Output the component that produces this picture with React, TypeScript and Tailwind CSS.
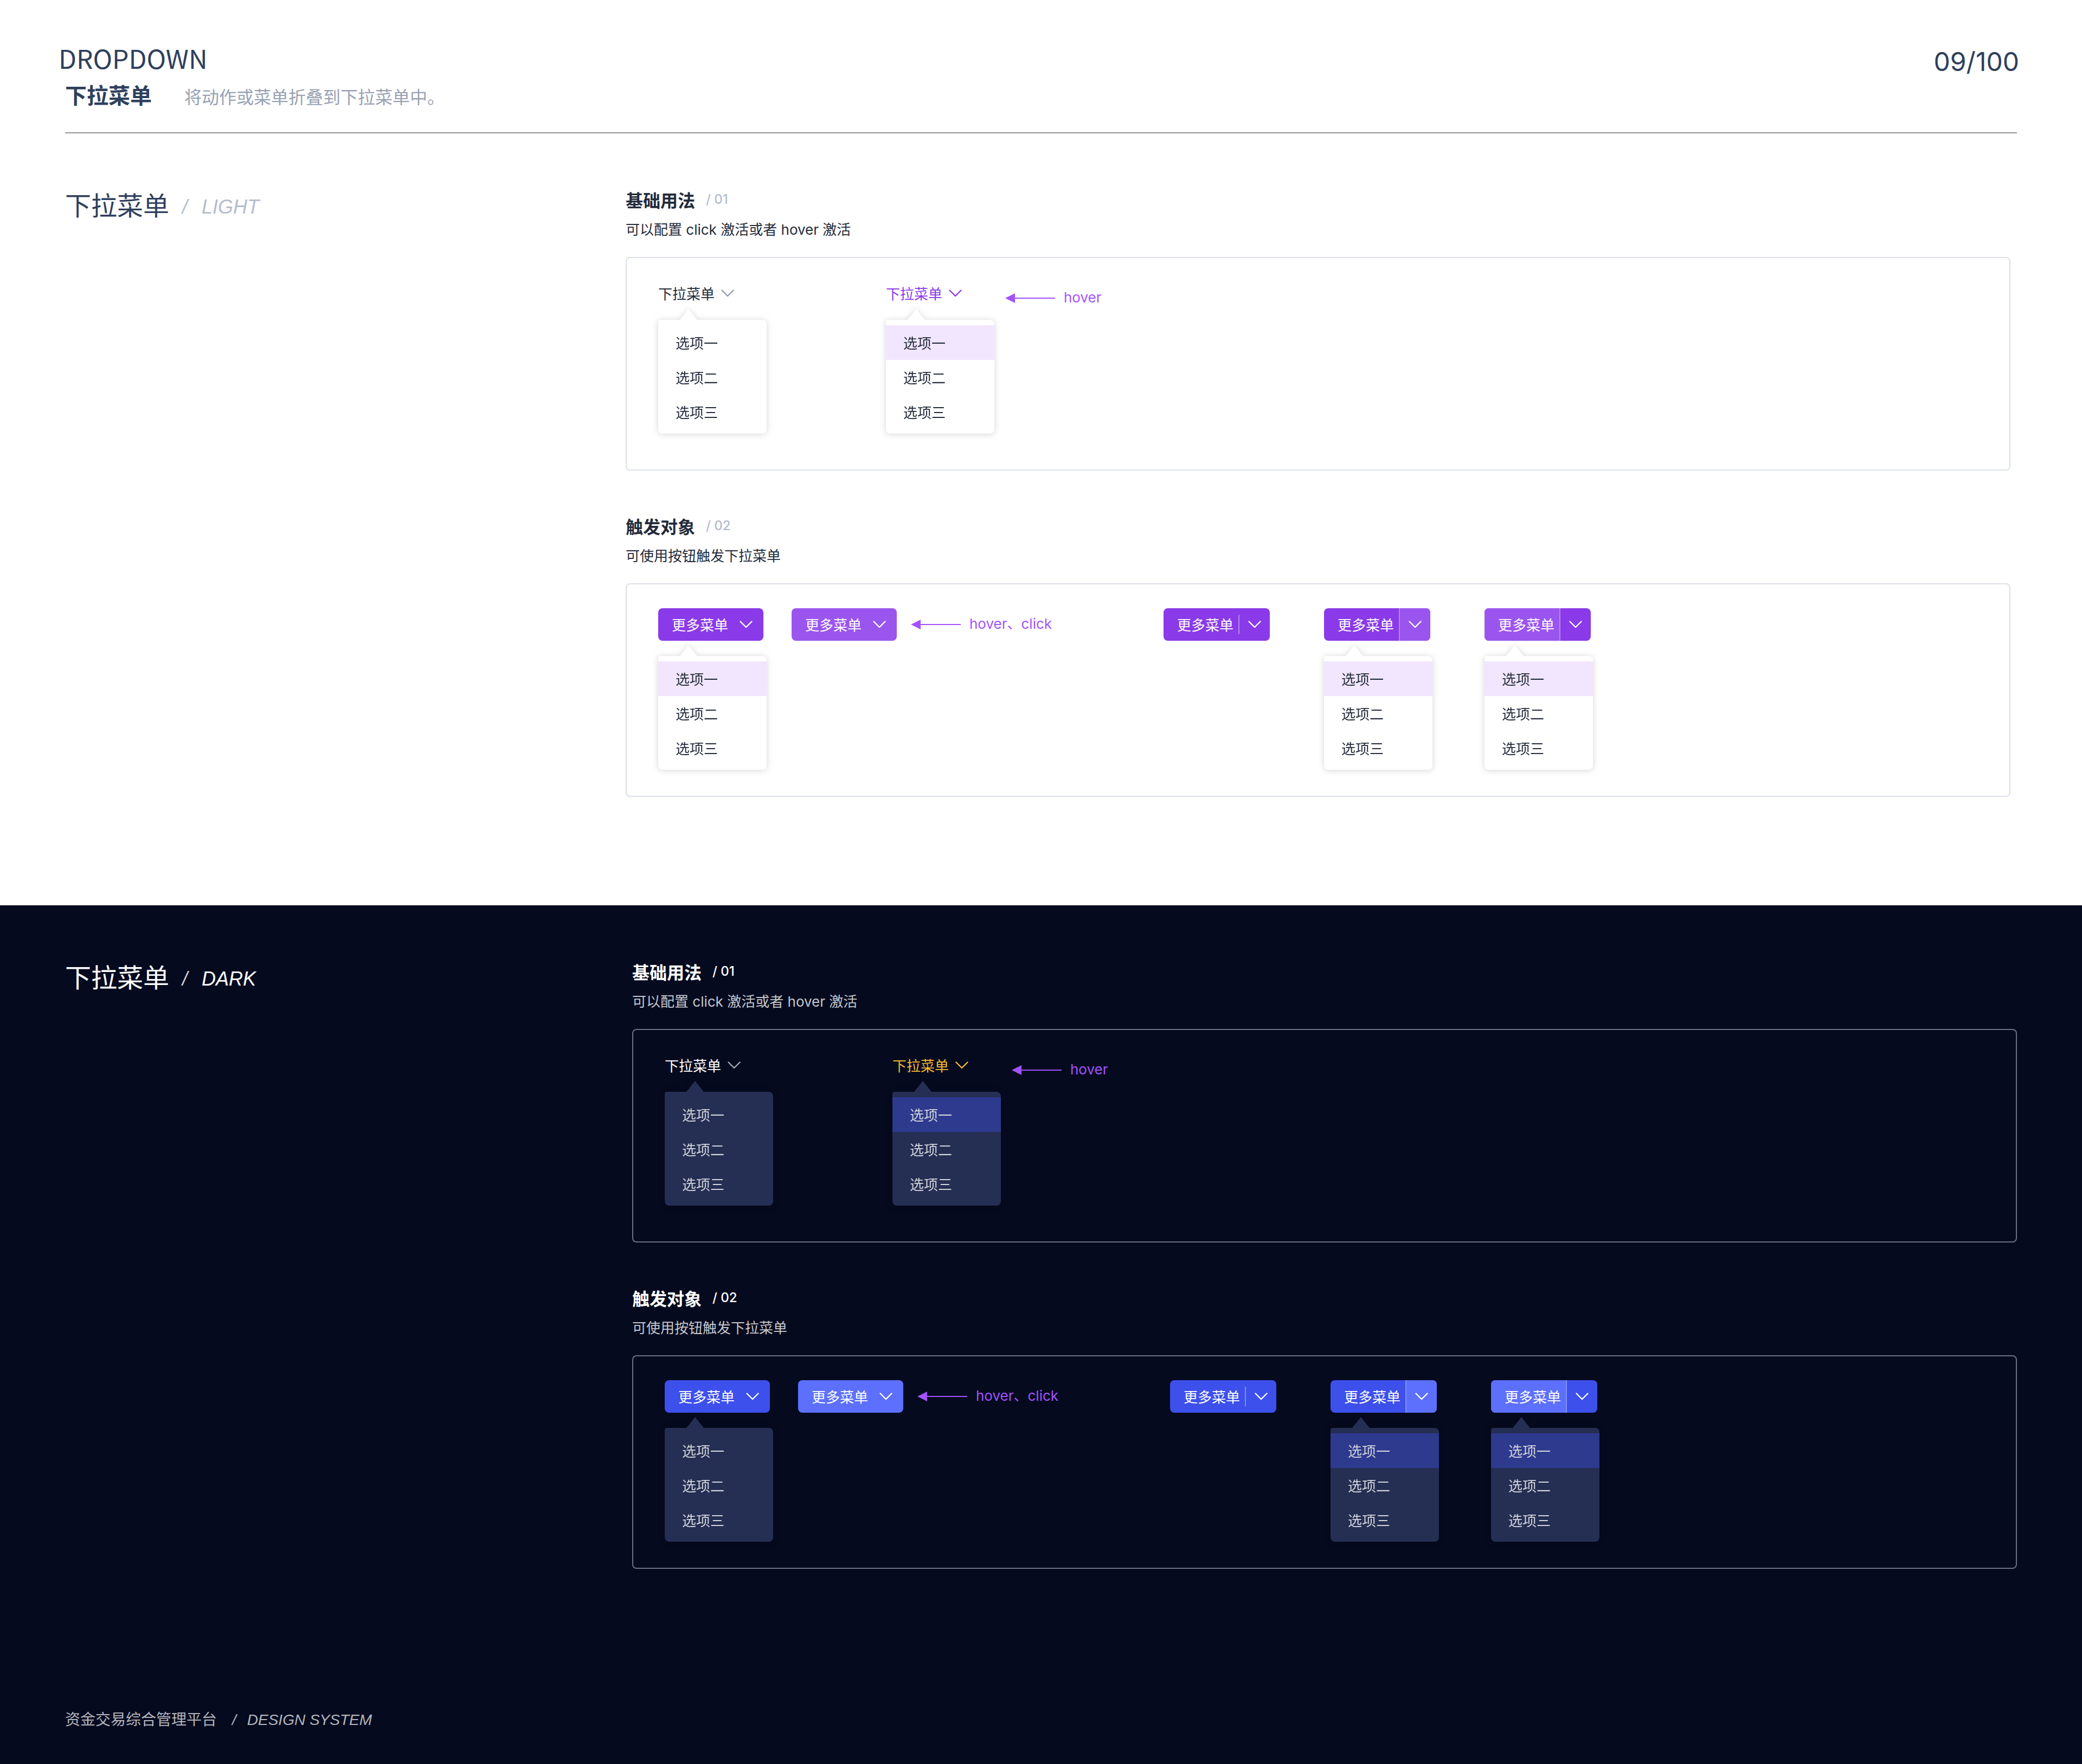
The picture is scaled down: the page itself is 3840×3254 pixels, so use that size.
import React from "react";

type Theme = {
  title: string;
  slash: string;
  mode: string;
  heading: string;
  index: string;
  desc: string;
  box: string;
  trigger: string;
  triggerIcon: string;
  active: string;
  menu: string;
  caret: string;
  item: string;
  itemActive: string;
  shadow: string;
  button: string;
  buttonHover: string;
  divider: string;
};

const light: Theme = {
  title: "text-[#2f405c]",
  slash: "text-[#b4bccc]",
  mode: "text-[#b4bccc]",
  heading: "text-[#232b3b]",
  index: "text-[#b4bccc]",
  desc: "text-[#232b3b]",
  box: "border-[#dcdfea]",
  trigger: "text-[#232b3b]",
  triggerIcon: "text-[#909aaa]",
  active: "text-[#8a3ae8]",
  menu: "bg-white",
  caret: "text-white",
  item: "text-[#232b3b]",
  itemActive: "bg-[#f2e6ff]",
  shadow: "drop-shadow-[0_1px_6px_rgba(0,0,0,0.17)]",
  button: "bg-[#8a3ae8]",
  buttonHover: "bg-[#9b55ef]",
  divider: "bg-[#b686f2]",
};

const dark: Theme = {
  title: "text-white",
  slash: "text-[#cdced2]",
  mode: "text-white",
  heading: "text-white",
  index: "text-white",
  desc: "text-[#c6c7cc]",
  box: "border-[#6d7080]",
  trigger: "text-white",
  triggerIcon: "text-[#a4a8b4]",
  active: "text-[#f5b82e]",
  menu: "bg-[#252e53]",
  caret: "text-[#252e53]",
  item: "text-[#d3d5dc]",
  itemActive: "bg-[#2e3a8e]",
  shadow: "drop-shadow-[0_1px_6px_rgba(0,0,0,0.3)]",
  button: "bg-[#3d50eb]",
  buttonHover: "bg-[#5d70fd]",
  divider: "bg-[#7f8ff8]",
};

function Chevron() {
  return (
    <svg className="h-3.5 w-6 shrink-0" viewBox="0 0 24 14" fill="none" stroke="currentColor" strokeWidth="2.4" strokeLinecap="round" strokeLinejoin="round" aria-hidden="true">
      <path d="M1.5 1.5L12 12 22.5 1.5" />
    </svg>
  );
}

function Note({ children }: { children: React.ReactNode }) {
  return (
    <div className="flex h-[58px] items-center gap-4 font-['Inter','Noto_Sans_CJK_SC',sans-serif] text-[26px] leading-10 whitespace-nowrap text-[#a352ff]">
      <svg className="h-6 w-[92px] shrink-0" viewBox="0 0 92 24" fill="currentColor" aria-hidden="true">
        <path d="M0 13l18-9v18z" />
        <path d="M16 12h76v2H16z" />
      </svg>
      <span>{children}</span>
    </div>
  );
}

function Menu({ t, highlight }: { t: Theme; highlight?: boolean }) {
  return (
    <div className={`relative mt-7 w-[200px] ${t.shadow}`}>
      <svg className={`absolute -top-5 left-10 h-[21px] w-8 ${t.caret}`} viewBox="0 0 32 21" fill="currentColor" aria-hidden="true">
        <path d="M16 0l16 20v1H0v-1z" />
      </svg>
      <ul className={`rounded-lg rounded-tl-sm pt-2.5 pb-2 ${t.menu}`}>
        {["选项一", "选项二", "选项三"].map((label, i) => (
          <li key={label}>
            <button type="button" className={`block h-16 w-full px-8 text-left text-[26px] leading-10 ${t.item} ${highlight && i === 0 ? t.itemActive : ""}`}>
              {label}
            </button>
          </li>
        ))}
      </ul>
    </div>
  );
}

function TextTrigger({ t, active }: { t: Theme; active?: boolean }) {
  return (
    <div className="w-[200px]">
      <button type="button" className={`flex h-[42px] items-center gap-3 text-[26px] leading-10 whitespace-nowrap ${active ? t.active : t.trigger}`}>
        下拉菜单
        <span className={active ? t.active : t.triggerIcon}>
          <Chevron />
        </span>
      </button>
      <Menu t={t} highlight={active} />
    </div>
  );
}

function MoreButton({ t, hover }: { t: Theme; hover?: boolean }) {
  return (
    <button type="button" className={`flex h-[60px] w-[194px] items-center justify-between rounded-lg pr-5 pl-[25px] text-[26px] leading-10 whitespace-nowrap text-white ${hover ? t.buttonHover : t.button}`}>
      更多菜单
      <Chevron />
    </button>
  );
}

function SplitButton({ t, hover }: { t: Theme; hover?: "label" | "arrow" }) {
  return (
    <div className={`flex h-[60px] w-[196px] items-center overflow-hidden rounded-lg text-[26px] leading-10 text-white ${t.button}`}>
      <button type="button" className={`h-full flex-1 pl-[25px] text-left whitespace-nowrap ${hover === "label" ? t.buttonHover : ""}`}>
        更多菜单
      </button>
      <span className={`w-0.5 ${t.divider} ${hover ? "h-full" : "h-9"}`} />
      <button type="button" aria-label="展开菜单" className={`flex h-full w-14 items-center justify-center ${hover === "arrow" ? t.buttonHover : ""}`}>
        <Chevron />
      </button>
    </div>
  );
}

function Example({ t, title, index, desc, children, box }: { t: Theme; title: string; index: string; desc: React.ReactNode; children: React.ReactNode; box: string }) {
  return (
    <section>
      <div className="flex h-10 items-center gap-5">
        <h3 className={`text-[32px] leading-10 font-bold ${t.heading}`}>{title}</h3>
        <span className={`font-['Inter',sans-serif] text-2xl leading-10 font-medium ${t.index}`}>/ {index}</span>
      </div>
      <p className={`mt-[18px] font-['Inter','Noto_Sans_CJK_SC',sans-serif] text-[26px] leading-9 ${t.desc}`}>{desc}</p>
      <div className={`mt-8 flex items-start rounded-lg border-2 pt-11 pl-[58px] ${box} ${t.box}`}>{children}</div>
    </section>
  );
}

function Showcase({ t, mode, columns, firstHighlighted }: { t: Theme; mode: string; columns: string; firstHighlighted?: boolean }) {
  return (
    <div className={`grid pt-[102px] pl-[120px] ${columns}`}>
      <h2 className={`flex h-14 items-center gap-6 text-5xl leading-[56px] ${t.title}`}>
        下拉菜单
        <span className="flex gap-[26px] pt-3 font-['Liberation_Sans',sans-serif] text-4xl italic">
          <span className={t.slash}>/</span>
          <span className={t.mode}>{mode}</span>
        </span>
      </h2>
      <div className="flex flex-col gap-[82px]">
        <Example t={t} title="基础用法" index="01" desc="可以配置 click 激活或者 hover 激活" box="pb-[66px]">
          <TextTrigger t={t} />
          <div className="ml-[220px]">
            <TextTrigger t={t} active />
          </div>
          <div className="ml-5">
            <Note>hover</Note>
          </div>
        </Example>
        <Example t={t} title="触发对象" index="02" desc="可使用按钮触发下拉菜单" box="pb-12">
          <div className="flex w-[932px] items-start">
            <div className="w-[200px]">
              <MoreButton t={t} />
              <Menu t={t} highlight={firstHighlighted} />
            </div>
            <div className="ml-[46px]">
              <MoreButton t={t} hover />
            </div>
            <div className="ml-[26px]">
              <Note>hover、click</Note>
            </div>
          </div>
          <div className="flex items-start gap-24">
            <div className="w-[200px]">
              <SplitButton t={t} />
            </div>
            <div className="w-[200px]">
              <SplitButton t={t} hover="arrow" />
              <Menu t={t} highlight />
            </div>
            <div className="w-[200px]">
              <SplitButton t={t} hover="label" />
              <Menu t={t} highlight />
            </div>
          </div>
        </Example>
      </div>
    </div>
  );
}

export default function App() {
  return (
    <div className="bg-white font-['Noto_Sans_CJK_SC',sans-serif]" lang="zh-CN">
      <header className="flex items-start justify-between pt-[78px] pr-[116px] pb-[42px] pl-[108px] text-[#2f405c]">
        <div>
          <h1 className="text-5xl leading-[56px]">DROPDOWN</h1>
          <div className="mt-3 flex h-14 items-baseline gap-[60px] pl-3">
            <span className="text-[40px] leading-[56px] font-bold">下拉菜单</span>
            <span className="text-[32px] leading-[56px] text-[#98a2b3]">将动作或菜单折叠到下拉菜单中。</span>
          </div>
        </div>
        <span className="mt-2 font-['Inter',sans-serif] text-5xl leading-[56px]">09/100</span>
      </header>
      <hr className="mx-[120px] border-t-2 border-[#979797]" />
      <main>
        <div className="pr-[132px] pb-[200px]">
          <Showcase t={light} mode="LIGHT" columns="grid-cols-[1034px_1fr]" firstHighlighted />
        </div>
        <div className="bg-[#050a1f] pr-[120px] pb-16">
          <Showcase t={dark} mode="DARK" columns="grid-cols-[1046px_1fr]" />
          <footer className="mt-64 flex h-10 items-baseline pl-[120px] text-[28px] leading-10 text-[#b4b6bc]">
            资金交易综合管理平台
            <span className="ml-7 font-['Liberation_Sans',sans-serif] italic">/</span>
            <span className="ml-5 font-['Liberation_Sans',sans-serif] italic">DESIGN SYSTEM</span>
          </footer>
        </div>
      </main>
    </div>
  );
}
